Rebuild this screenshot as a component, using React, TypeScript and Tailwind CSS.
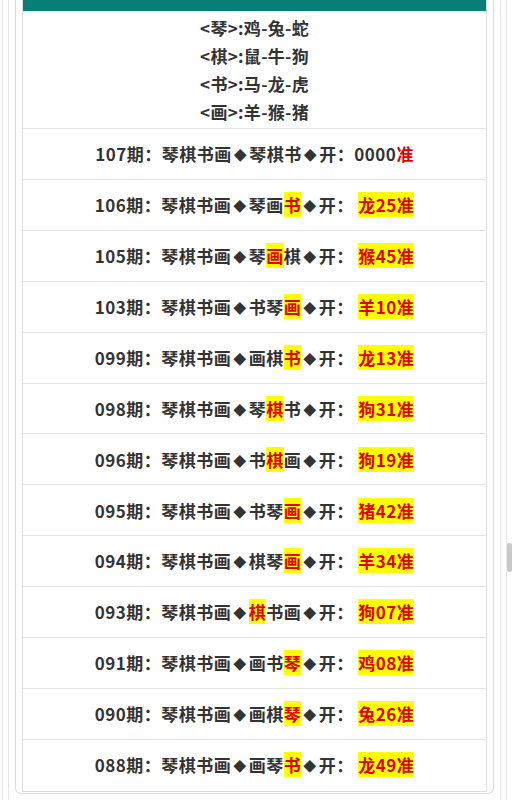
import React from "react";

type Row = { no: string; pre: string; hl: string; post: string; res: string };

const rows: Row[] = [
  { no: "106", pre: "琴画", hl: "书", post: "", res: "龙25准" },
  { no: "105", pre: "琴", hl: "画", post: "棋", res: "猴45准" },
  { no: "103", pre: "书琴", hl: "画", post: "", res: "羊10准" },
  { no: "099", pre: "画棋", hl: "书", post: "", res: "龙13准" },
  { no: "098", pre: "琴", hl: "棋", post: "书", res: "狗31准" },
  { no: "096", pre: "书", hl: "棋", post: "画", res: "狗19准" },
  { no: "095", pre: "书琴", hl: "画", post: "", res: "猪42准" },
  { no: "094", pre: "棋琴", hl: "画", post: "", res: "羊34准" },
  { no: "093", pre: "", hl: "棋", post: "书画", res: "狗07准" },
  { no: "091", pre: "画书", hl: "琴", post: "", res: "鸡08准" },
  { no: "090", pre: "画棋", hl: "琴", post: "", res: "兔26准" },
  { no: "088", pre: "画琴", hl: "书", post: "", res: "龙49准" },
];

const font = { fontFamily: '"Noto Sans CJK SC", "Noto Sans", sans-serif' };

function D() {
  return <span className="mx-[2px] text-[13px] align-[1px]">◆</span>;
}

export default function App() {
  return (
    <div className="relative h-[800px] w-[512px] overflow-hidden bg-white" style={font}>
      <div className="ml-[2px] mr-[5px] h-full border-x border-[#e6e6e6] px-[5px]">
        <div className="h-full border-x border-[#e6e6e6] px-[6px]">
          <div className="h-[794px] rounded-b-[6px] border-x border-b border-[#dcdcdc] px-[6px] pb-[4px]">
            <div className="border-x border-b border-[#dddddd]">
              <div className="h-[12px] bg-[#077f79] border-b border-[#e3e3e3]" />
              <div className="flex flex-col items-center pt-[2px] pb-[2px] border-b border-[#e3e3e3] text-[17px] font-bold leading-[28px] text-[#333] tracking-[0.3px]">
                <div>&lt;琴&gt;:鸡-兔-蛇</div>
                <div>&lt;棋&gt;:鼠-牛-狗</div>
                <div>&lt;书&gt;:马-龙-虎</div>
                <div>&lt;画&gt;:羊-猴-猪</div>
              </div>
              <div className="flex h-[51px] items-center justify-center border-b border-[#e3e3e3] text-[17px] font-bold text-[#333] tracking-[0.5px]">
                <span className="whitespace-pre">
                  107期：琴棋书画<D />琴棋书<D />开：0000
                  <span className="text-[#e00000]">准</span>
                </span>
              </div>
              {rows.map((r, i) => (
                <div
                  key={r.no}
                  className={
                    "flex h-[50.9px] items-center justify-center text-[17px] font-bold text-[#333] tracking-[0.5px] " +
                    (i === rows.length - 1 ? "" : "border-b border-[#e3e3e3]")
                  }
                >
                  <span className="whitespace-pre">
                    {r.no}期：琴棋书画<D />{r.pre}
                    <span className="bg-[#ffff00] text-[#e00000]">{r.hl}</span>
                    {r.post}<D />开：{" "}
                    <span className="bg-[#ffff00] text-[#e00000]">{r.res}</span>
                  </span>
                </div>
              ))}
            </div>
          </div>
        </div>
      </div>
      <div className="absolute right-0 top-[543px] h-[29px] w-[5px] rounded-[2px] bg-[#c9c9c9]" />
    </div>
  );
}
